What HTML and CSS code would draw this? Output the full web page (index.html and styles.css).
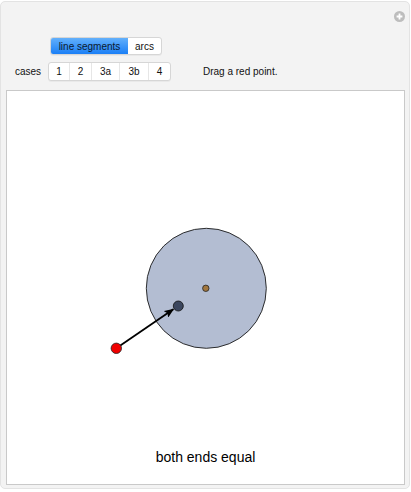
FILE: index.html
```html
<!DOCTYPE html>
<html>
<head>
<meta charset="utf-8">
<link rel="stylesheet" href="styles.css">
</head>
<body>
<div class="panel">
  <span class="plus" aria-hidden="true">
    <svg width="11" height="11" viewBox="0 0 11 11"><circle cx="5.5" cy="5.5" r="5.5" fill="#bdbdbd"/><path d="M5.5 2.6v5.8M2.6 5.5h5.8" stroke="#fff" stroke-width="1.8"/></svg>
  </span>
  <div class="row row-mode">
    <div class="seg">
      <span class="btn active w-line">line segments</span>
      <span class="btn w-arcs">arcs</span>
    </div>
  </div>
  <div class="row row-cases">
    <span class="label">cases</span>
    <div class="seg">
      <span class="btn w1">1</span>
      <span class="btn w2">2</span>
      <span class="btn w3a">3a</span>
      <span class="btn w3b">3b</span>
      <span class="btn w4">4</span>
    </div>
    <span class="hint">Drag a red point.</span>
  </div>
  <div class="plot">
    <svg class="canvas" width="397" height="393" viewBox="7 90 397 393">
      <defs>
        <marker id="ah" markerWidth="10" markerHeight="8" refX="9" refY="4" orient="auto" markerUnits="userSpaceOnUse">
          <path d="M0 0L10 4L0 8L2 4Z" fill="#000"/>
        </marker>
      </defs>
      <circle cx="206.3" cy="287.3" r="60" fill="#b3bdd2" stroke="#1a1a1a" stroke-width="0.9"/>
      <circle cx="205.8" cy="287.3" r="3.2" fill="#a2773f" stroke="#222" stroke-width="0.8"/>
      <line x1="116.3" y1="347.3" x2="173.3" y2="308.3" stroke="#000" stroke-width="1.8" marker-end="url(#ah)"/>
      <circle cx="178.3" cy="305" r="5" fill="#3b465e" stroke="#111" stroke-width="0.8"/>
      <circle cx="116.3" cy="347.3" r="5.2" fill="#f00000" stroke="#222" stroke-width="0.8"/>
      <text x="205.5" y="461" text-anchor="middle" class="caption">both ends equal</text>
    </svg>
  </div>
</div>
</body>
</html>
```
FILE: styles.css
```css
html, body {
  margin: 0;
  padding: 0;
  background: #ffffff;
}
body {
  font-family: "Liberation Sans", Arial, sans-serif;
  color: #111;
}
.panel {
  position: relative;
  box-sizing: border-box;
  width: 410px;
  height: 488px;
  margin-top: 1px;
  background: #f3f3f3;
  border: 1px solid #e3e3e3;
  border-radius: 5px;
  padding-top: 35px;
}
.plus {
  position: absolute;
  top: 9px;
  right: 4px;
  line-height: 0;
}
.row {
  display: flex;
  align-items: center;
}
.row-mode {
  padding-left: 49px;
  height: 18px;
}
.row-cases {
  margin-top: 7px;
  height: 19px;
  padding-left: 14px;
}
.label {
  font-size: 10px;
  width: 33px;
}
.seg {
  display: flex;
  height: 100%;
  box-sizing: border-box;
  background: #fff;
  border: 1px solid #d6d6d6;
  border-radius: 3px;
  box-shadow: 0 1px 0 rgba(0,0,0,0.04);
  overflow: hidden;
}
.btn {
  display: flex;
  align-items: center;
  justify-content: center;
  font-size: 10px;
  color: #111;
  border-left: 1px solid #e6e6e6;
}
.btn:first-child {
  border-left: none;
}
.btn.active {
  background: linear-gradient(#63b0fb, #1b7ff6);
  color: #0c1a2e;
}
.w-line { width: 77px; }
.w-arcs { width: 33px; border-left: none; }
.w1 { width: 20px; }
.w2 { width: 21px; }
.w3a { width: 27px; }
.w3b { width: 28px; }
.w4 { width: 21px; }
.hint {
  font-size: 10px;
  margin-left: 32px;
}
.plot {
  margin-top: 9px;
  margin-left: 5px;
  width: 399px;
  height: 395px;
  box-sizing: border-box;
  background: #fff;
  border: 1px solid #c9c9c9;
}
.canvas {
  display: block;
}
.caption {
  font-family: "Liberation Sans", Arial, sans-serif;
  font-size: 14px;
  fill: #000;
}
```
